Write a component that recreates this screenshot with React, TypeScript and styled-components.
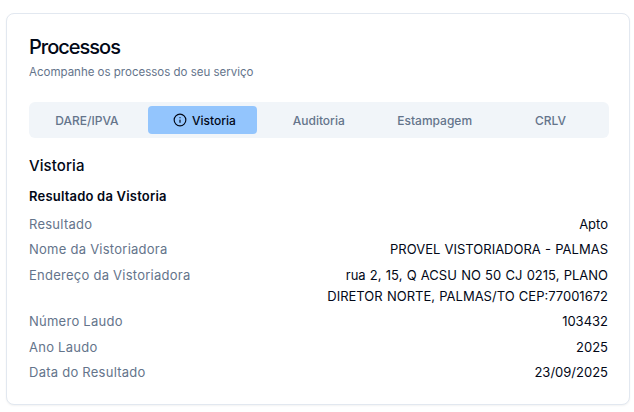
import styled, { createGlobalStyle } from 'styled-components';

const GlobalStyle = createGlobalStyle`
  html, body {
    margin: 0;
    padding: 0;
    background: #ffffff;
    font-family: Inter, "Noto Sans", sans-serif;
  }
`;

const Page = styled.div`
  padding: 13px 4px 7px 6px;
`;

const Card = styled.section`
  box-sizing: border-box;
  height: 392px;
  padding: 21px 20px 0 22px;
  background: #fff;
  border: 1px solid #e2e8f0;
  border-radius: 8px;
  box-shadow: 0 1px 2px rgba(0, 0, 0, 0.05);
`;

const Title = styled.h1`
  margin: 0;
  font-size: 20px;
  line-height: 24px;
  font-weight: 500;
  letter-spacing: -1px;
  color: #020817;
`;

const Subtitle = styled.p`
  margin: 4px 0 0;
  font-size: 11.5px;
  line-height: 18px;
  color: #64748b;
`;

const TabList = styled.div`
  display: grid;
  grid-template-columns: repeat(5, 1fr);
  gap: 7px;
  height: 36px;
  margin-top: 21px;
  padding: 4px 4px 4px 3.5px;
  box-sizing: border-box;
  background: #f1f5f9;
  border-radius: 6px;
`;

const Tab = styled.div<{ $active?: boolean }>`
  display: flex;
  align-items: center;
  justify-content: center;
  gap: 5px;
  padding-left: ${(p) => (p.$active ? '3px' : '0')};
  font-size: 12px;
  font-weight: 500;
  border-radius: 4px;
  color: ${(p) => (p.$active ? '#020817' : '#64748b')};
  background: ${(p) => (p.$active ? '#93c5fd' : 'transparent')};
`;

const SectionTitle = styled.h2`
  margin: 18px 0 0;
  font-size: 15px;
  line-height: 20px;
  font-weight: 500;
  letter-spacing: 0.1px;
  color: #020817;
`;

const GroupTitle = styled.h3`
  margin: 10px 0 0;
  font-size: 13px;
  line-height: 20px;
  font-weight: 600;
  letter-spacing: 0.2px;
  color: #020817;
`;

const Rows = styled.dl`
  display: flex;
  flex-direction: column;
  gap: 4.5px;
  margin: 7.7px 0 0;
  padding-right: 1px;
`;

const Row = styled.div`
  display: flex;
  justify-content: space-between;
  gap: 16px;
  font-size: 13px;
  line-height: 21px;
`;

const Label = styled.dt`
  letter-spacing: 0.25px;
  color: #64748b;
`;

const Value = styled.dd`
  margin: 0;
  max-width: 285px;
  text-align: right;
  word-spacing: 0.6px;
  color: #020817;
`;

const InfoIcon = () => (
  <svg width="14" height="14" viewBox="0 0 24 24" fill="none" stroke="currentColor" strokeWidth="2" strokeLinecap="round" strokeLinejoin="round">
    <circle cx="12" cy="12" r="10" />
    <path d="M12 16v-4" />
    <path d="M12 8h.01" />
  </svg>
);

const tabs = ['DARE/IPVA', 'Vistoria', 'Auditoria', 'Estampagem', 'CRLV'];

const rows = [
  ['Resultado', 'Apto'],
  ['Nome da Vistoriadora', 'PROVEL VISTORIADORA - PALMAS'],
  ['Endereço da Vistoriadora', 'rua 2, 15, Q ACSU NO 50 CJ 0215, PLANO DIRETOR NORTE, PALMAS/TO CEP:77001672'],
  ['Número Laudo', '103432'],
  ['Ano Laudo', '2025'],
  ['Data do Resultado', '23/09/2025'],
];

export default function App() {
  return (
    <Page>
      <GlobalStyle />
      <Card>
        <Title>Processos</Title>
        <Subtitle>Acompanhe os processos do seu serviço</Subtitle>
        <TabList>
          {tabs.map((t) => (
            <Tab key={t} $active={t === 'Vistoria'}>
              {t === 'Vistoria' && <InfoIcon />}
              {t}
            </Tab>
          ))}
        </TabList>
        <SectionTitle>Vistoria</SectionTitle>
        <GroupTitle>Resultado da Vistoria</GroupTitle>
        <Rows>
          {rows.map(([label, value]) => (
            <Row key={label}>
              <Label>{label}</Label>
              <Value>{value}</Value>
            </Row>
          ))}
        </Rows>
      </Card>
    </Page>
  );
}
